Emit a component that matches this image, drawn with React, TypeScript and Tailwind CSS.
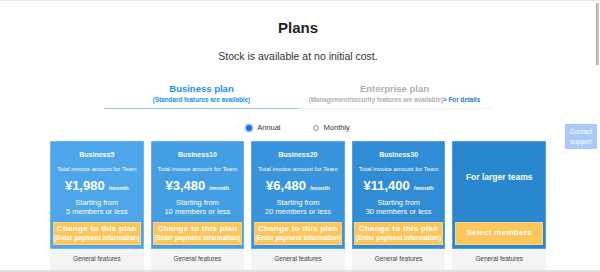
import React from "react";

const plans = [
  { name: "Business5", price: "¥1,980", members: "5 members or less", bg: "bg-[#4ea6ea]" },
  { name: "Business10", price: "¥3,480", members: "10 members or less", bg: "bg-[#439ee4]" },
  { name: "Business20", price: "¥6,480", members: "20 members or less", bg: "bg-[#3894dc]" },
  { name: "Business30", price: "¥11,400", members: "30 members or less", bg: "bg-[#2f8cd5]" },
];

function Radio({ checked, label }: { checked: boolean; label: string }) {
  return (
    <div className="flex items-center gap-[5px]">
      {checked ? (
        <span className="w-[6px] h-[6px] rounded-full bg-[#1a73e8] ring-[1.5px] ring-[#a9c8f3]" />
      ) : (
        <span className="w-[6px] h-[6px] rounded-full border border-[#9a9a9a] bg-white" />
      )}
      <span className="text-[7.5px] leading-[10px] text-[#333]">{label}</span>
    </div>
  );
}

function Button({ title, sub }: { title: string; sub?: string }) {
  return (
    <div className="mt-auto h-[23px] bg-[#fdc55a] border border-[#fdd587] flex flex-col items-center justify-center text-white font-bold">
      <span className="text-[8px] leading-[10px] tracking-[0.3px]">{title}</span>
      {sub && <span className="text-[6.4px] leading-[8px]">{sub}</span>}
    </div>
  );
}

export default function App() {
  return (
    <div className="relative w-[600px] h-[272px] overflow-hidden bg-white border-t border-[#e8e8e8] font-['Liberation_Sans',Arial,sans-serif]">
      <div className="w-[596px] flex flex-col items-center">
        <h1 className="mt-[18px] text-[15px] leading-[18px] font-bold text-[#222]">Plans</h1>
        <p className="mt-[12.5px] text-[10.5px] leading-[13px] text-[#333]">Stock is available at no initial cost.</p>

        <div className="mt-[20px] w-[386px] flex">
          <div className="flex-1 text-center border-b border-[#90c6f4] pb-[4px]">
            <div className="text-[9.5px] leading-[11px] font-bold text-[#2190ee]">Business plan</div>
            <div className="mt-[2px] text-[6.3px] leading-[8px] font-bold text-[#2190ee]">(Standard features are available)</div>
          </div>
          <div className="flex-1 text-center border-b border-[#efefef] pb-[4px]">
            <div className="text-[9.5px] leading-[11px] font-bold text-[#b0b0b0]">Enterprise plan</div>
            <div className="mt-[2px] text-[6.3px] leading-[8px] font-bold text-[#b0b0b0]">
              (Management/security features are available)<span className="text-[#2a7dcc]">&gt; For details</span>
            </div>
          </div>
        </div>

        <div className="mt-[14px] flex items-center gap-[32px]">
          <Radio checked label="Annual" />
          <Radio checked={false} label="Monthly" />
        </div>

        <div className="mt-[8px] w-[496px] grid grid-cols-5 gap-[7px]">
          {plans.map((p) => (
            <div key={p.name} className="flex flex-col">
              <div className={`${p.bg} h-[108px] border border-white/20 px-[1.5px] pb-[3px] flex flex-col items-center text-white text-center`}>
                <div className="mt-[8.5px] text-[7px] leading-[9px] font-bold">{p.name}</div>
                <div className="mt-[5.5px] text-[6px] leading-[8px]">Total invoice amount for Team</div>
                <div className="mt-[5.5px] flex items-baseline gap-[4px]">
                  <span className="text-[13px] leading-[15px] font-bold">{p.price}</span>
                  <span className="text-[6px] font-bold">/month</span>
                </div>
                <div className="mt-[5px] text-[7.5px] leading-[9px]">Starting from</div>
                <div className="text-[7.5px] leading-[9px]">{p.members}</div>
                <div className="mt-auto w-full">
                  <Button title="Change to this plan" sub="(Enter payment information)" />
                </div>
              </div>
              <div className="h-[21px] bg-[#f4f4f4] flex items-center justify-center text-[6.4px] text-[#444]">General features</div>
            </div>
          ))}
          <div className="flex flex-col">
            <div className="bg-[#2987cf] h-[108px] border border-white/20 px-[1.5px] pb-[3px] flex flex-col items-center text-white text-center">
              <div className="mt-[30.5px] text-[8.5px] leading-[10px] font-bold">For larger teams</div>
              <div className="mt-auto w-full">
                <Button title="Select members" />
              </div>
            </div>
            <div className="h-[21px] bg-[#f4f4f4] flex items-center justify-center text-[6.4px] text-[#444]">General features</div>
          </div>
        </div>
      </div>
      <div className="w-full h-[2px] bg-[#e2e2e2]" />

      <div className="absolute right-[3px] top-[123px] w-[32px] h-[25px] bg-[#a9c9f7] flex flex-col items-center justify-center text-white text-[6.5px] leading-[10px]">
        <span>Contact</span>
        <span>support</span>
      </div>
      <div className="absolute right-[1px] top-[2px] w-[3px] h-[62px] bg-[#c4c4c4] border-l border-[#a8a8a8]" />
    </div>
  );
}
